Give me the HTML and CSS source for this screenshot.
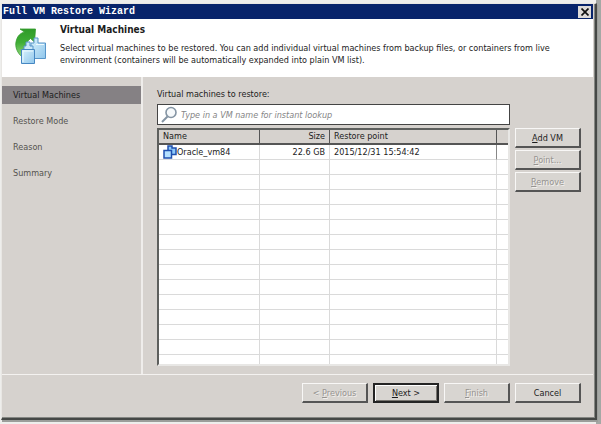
FILE: index.html
```html
<!DOCTYPE html>
<html lang="en">
<head>
<meta charset="utf-8">
<title>Full VM Restore Wizard</title>
<link rel="stylesheet" href="styles.css">
</head>
<body>
<div class="window">
  <header class="titlebar">
    <span class="caption">Full VM Restore Wizard</span>
    <button class="close" type="button" aria-label="Close">
      <svg width="8" height="8" viewBox="0 0 8 8"><path d="M0.5 0.5L7.5 7.5M7.5 0.5L0.5 7.5" stroke="#111" stroke-width="1.7"/></svg>
    </button>
  </header>
  <section class="banner">
    <svg class="logo" width="32" height="38" viewBox="0 0 32 38">
      <defs>
        <linearGradient id="arrow" x1="0" y1="0" x2="0" y2="1"><stop offset="0" stop-color="#2f9a28"/><stop offset=".45" stop-color="#3fae35"/><stop offset="1" stop-color="#a3dd8a"/></linearGradient>
        <linearGradient id="box" x1="0" y1="0" x2="1" y2="1"><stop offset="0" stop-color="#d9f2fc"/><stop offset="1" stop-color="#8fc6ec"/></linearGradient>
      </defs>
      <path d="M5 1H20.500L19.500 14L15.500 10.500C10 15 9 21 10 31C3 27-1 19 1.500 12C3 7 6 5 9.500 4Z" fill="url(#arrow)" stroke="#349a2c" stroke-width=".8"/>
      <path d="M16 19V15H19V10H23V15H30.500V30.500H16Z" fill="url(#box)" stroke="#5795c9"/>
      <path d="M9 22V18H11V14H15V18H18V22" fill="#c9e8f8" stroke="#5795c9"/>
      <path d="M6.500 21.500H19.500V35.500H6.500Z" fill="url(#box)" stroke="#4687c2"/>
      <path d="M8 23H18M8 23V34M21 16.500H29" stroke="#eefaff" fill="none"/>
    </svg>
    <div>
      <h1>Virtual Machines</h1>
      <p>Select virtual machines to be restored. You can add individual virtual machines from backup files, or containers from live<br>environment (containers will be automatically expanded into plain VM list).</p>
    </div>
  </section>
  <div class="body">
    <nav class="steps">
      <a class="step current" href="#machines">Virtual Machines</a>
      <a class="step" href="#mode">Restore Mode</a>
      <a class="step" href="#reason">Reason</a>
      <a class="step" href="#summary">Summary</a>
    </nav>
    <main class="content">
      <label class="label" for="lookup">Virtual machines to restore:</label>
      <div class="search">
        <svg width="16" height="18" viewBox="0 0 16 18"><circle cx="10" cy="6.500" r="5" fill="#f6f9fb" stroke="#8494a3" stroke-width="1.600"/><path d="M6.500 10.500L1 16" stroke="#8494a3" stroke-width="2"/></svg>
        <input id="lookup" type="text" placeholder="Type in a VM name for instant lookup">
      </div>
      <div class="list">
        <table>
          <colgroup><col class="c-name"><col class="c-size"><col><col class="c-end"></colgroup>
          <thead><tr><th>Name</th><th class="num">Size</th><th>Restore point</th><th></th></tr></thead>
          <tbody>
            <tr class="item"><td><span class="vm"><svg width="14" height="14" viewBox="0 0 14 14"><path d="M5 1H9V3H13V9.500H5Z" fill="#8cc8fa" stroke="#1f4fae" stroke-width="1.500"/><path d="M1 5.500H8.500V13H1Z" fill="#b5e0ff" stroke="#1f4fae" stroke-width="1.500"/></svg>Oracle_vm84</span></td><td class="num">22.6 GB</td><td>2015/12/31 15:54:42</td><td></td></tr>
            <tr><td></td><td></td><td></td><td></td></tr>
            <tr><td></td><td></td><td></td><td></td></tr>
            <tr><td></td><td></td><td></td><td></td></tr>
            <tr><td></td><td></td><td></td><td></td></tr>
            <tr><td></td><td></td><td></td><td></td></tr>
            <tr><td></td><td></td><td></td><td></td></tr>
            <tr><td></td><td></td><td></td><td></td></tr>
            <tr><td></td><td></td><td></td><td></td></tr>
            <tr><td></td><td></td><td></td><td></td></tr>
            <tr><td></td><td></td><td></td><td></td></tr>
            <tr><td></td><td></td><td></td><td></td></tr>
            <tr><td></td><td></td><td></td><td></td></tr>
            <tr><td></td><td></td><td></td><td></td></tr>
            <tr class="last"><td></td><td></td><td></td><td></td></tr>
          </tbody>
        </table>
      </div>
      <div class="actions">
        <button class="btn" type="button"><u>A</u>dd VM</button>
        <button class="btn" type="button" disabled><u>P</u>oint...</button>
        <button class="btn" type="button" disabled><u>R</u>emove</button>
      </div>
    </main>
  </div>
  <footer class="footer">
    <button class="btn" type="button" disabled>&lt; <u>P</u>revious</button>
    <button class="btn default" type="button"><u>N</u>ext &gt;</button>
    <button class="btn" type="button" disabled><u>F</u>inish</button>
    <button class="btn" type="button">Cancel</button>
  </footer>
</div>
</body>
</html>
```

FILE: styles.css
```css
* { box-sizing: border-box; }

body {
  margin: 0;
  min-height: 100vh;
  padding: 3px 4px 4px 1px;
  display: flex;
  background: linear-gradient(to right, #eeeeec calc(100% - 5px), #a5a8a5 calc(100% - 5px));
  color: #1c1c1c;
  font: 9px/12px "DejaVu Sans Condensed", "DejaVu Sans", sans-serif;
}

.window {
  flex: 1;
  display: flex;
  flex-direction: column;
  background: #d6d2ce;
  border: 1px solid #e9e7e4;
  border-right: 2px solid #454846;
  border-bottom: 2px solid #454846;
  box-shadow: inset -1px -1px #858783, 1px 2px #9b9d9a;
  padding: 0 2px 0 0;
}

.titlebar {
  display: flex;
  align-items: center;
  justify-content: space-between;
  height: 15px;
  padding: 0 2px 0 1px;
  background: #08246b;
  color: #fff;
}

.caption { font: bold 10px/15px "Liberation Mono", monospace; }

.close {
  display: grid;
  place-items: center;
  width: 13px;
  height: 12px;
  padding: 0;
  border: 0;
  background: #dedbd8;
}

.banner {
  display: flex;
  gap: 13px;
  height: 58px;
  padding: 5px 20px 0 13px;
  background: #fff;
}

.logo { flex: none; margin-top: 4px; }
.banner > div { flex: 1; }

h1 {
  margin: 0 0 6px;
  font-size: 10px;
  line-height: 12px;
}

p { margin: 0; }

.body { flex: 1; display: flex; }

.steps {
  display: flex;
  flex-direction: column;
  flex: 0 0 141px;
  gap: 8px;
  padding-top: 9px;
  border-right: 2px solid #efedeb;
}

.step {
  padding: 0 11px;
  line-height: 18px;
  color: #55524f;
  text-decoration: none;
}

.step.current { background: #858184; color: #1c1c1c; }

.content {
  flex: 1;
  display: grid;
  grid-template-columns: 1fr 66px;
  grid-template-rows: 13px 21px 238px;
  column-gap: 5px;
  row-gap: 3px;
  padding: 11px 12px 7px 14px;
}

.label, .search { grid-column: 1; }
.list { grid-area: 3 / 1; }
.actions { grid-area: 3 / 2; }

.search {
  display: flex;
  align-items: center;
  gap: 4px;
  padding-left: 3px;
  background: #fff;
  border: 1px solid #444;
}

.search input {
  flex: 1;
  min-width: 0;
  padding: 0;
  border: 0;
  outline: 0;
  background: none;
  font: inherit;
  font-style: italic;
}

.search input::placeholder { color: #858585; opacity: 1; }

.list {
  min-width: 0;
  overflow: hidden;
  background: #fff;
  border: 2px solid #5d5f5d;
  border-right-color: #e8e7e5;
  border-bottom-color: #e8e7e5;
}

table {
  width: 100%;
  table-layout: fixed;
  border-collapse: separate;
  border-spacing: 0;
}

.c-name { width: 101px; }
.c-size { width: 70px; }
.c-end { width: 11px; }

th, td {
  height: 15px;
  padding: 0 4px;
  line-height: 14px;
  text-align: left;
  font-weight: normal;
  white-space: nowrap;
  border-right: 1px solid #dadada;
  border-bottom: 1px solid #dadada;
}

th {
  background: #d6d2ce;
  border-color: #555;
  border-bottom-width: 2px;
  line-height: 13px;
}

th:last-child, td:last-child { border-right: 0; padding: 0; }
.item td:nth-child(3) { border-right-color: #888; }
.last td { height: 12px; border-bottom: 0; }
.num { text-align: right; }

.vm { display: flex; height: 14px; }

.actions {
  display: flex;
  flex-direction: column;
  gap: 2px;
}

.btn {
  height: 20px;
  padding: 0;
  background: #d8d5d1;
  border: 1px solid #f8f7f6;
  border-right: 2px solid #555;
  border-bottom: 2px solid #555;
  color: #1c1c1c;
  font: inherit;
}

.btn:disabled { color: #969390; text-shadow: 1px 1px #f2f0ee; }
.btn.default { border: 2px solid #242424; box-shadow: inset 1px 1px #fff, inset -1px -1px #77746f; }

.footer {
  display: flex;
  justify-content: flex-end;
  gap: 5px;
  height: 44px;
  padding: 8px 12px 0;
  border-top: 1px solid #f4f2f0;
}

.footer .btn { width: 66px; }
```
